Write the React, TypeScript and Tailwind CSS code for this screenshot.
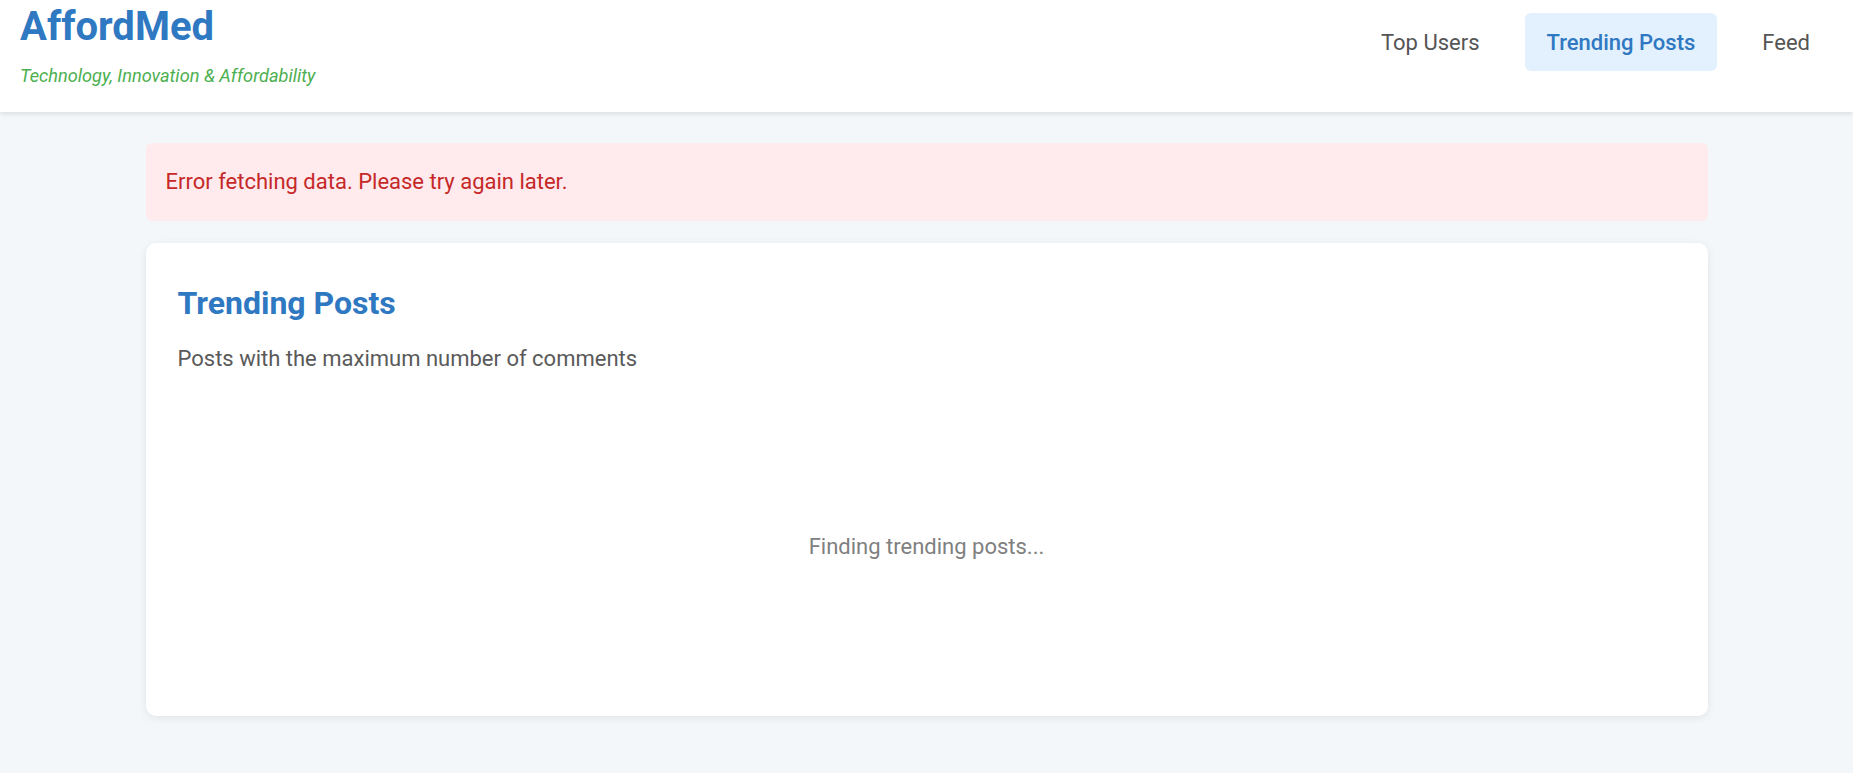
import { useState } from "react";

const NAV = ["Top Users", "Trending Posts", "Feed"];

export default function App() {
  const [active, setActive] = useState("Trending Posts");

  return (
    <div className="min-h-screen bg-[#f4f7fa] font-['Roboto',sans-serif]">
      <header className="h-[112px] bg-white shadow-[0_2px_5px_rgba(0,0,0,0.1)] flex justify-between items-start pl-[20px] pr-[21px]">
        <div className="pt-[3px]">
          <h1 className="text-[40px] leading-[48px] font-bold text-[#2f78c2]">AffordMed</h1>
          <p className="mt-[11px] text-[18.2px] leading-[27px] italic text-[#4caf50]">
            Technology, Innovation &amp; Affordability
          </p>
        </div>
        <nav className="flex gap-[23px] pt-[13px]">
          {NAV.map((item) => (
            <button
              key={item}
              onClick={() => setActive(item)}
              className={
                item === active
                  ? "h-[58px] px-[22px] rounded-md text-[22px] bg-[#e3f0fd] text-[#2f78c2] font-medium"
                  : "h-[58px] px-[22px] rounded-md text-[22px] text-[#555555]"
              }
            >
              {item}
            </button>
          ))}
        </nav>
      </header>

      <main className="max-w-[1562px] mx-auto pt-[31px]">
        <div className="bg-[#ffebee] text-[#c62828] rounded-md px-[20px] py-[22px] text-[22px] leading-[34px]">
          Error fetching data. Please try again later.
        </div>

        <section className="mt-[22px] bg-white rounded-[10px] shadow-[0_2px_8px_rgba(0,0,0,0.08)] pt-[41px] px-[32px] pb-[32px]">
          <h2 className="text-[32px] leading-[38px] font-bold text-[#2f78c2]">Trending Posts</h2>
          <p className="mt-[20px] text-[22px] leading-[33px] text-[#5a5a5a]">
            Posts with the maximum number of comments
          </p>
          <div className="pt-[155px] pb-[121px] text-center text-[22px] leading-[33px] text-[#808080]">
            Finding trending posts...
          </div>
        </section>
      </main>
    </div>
  );
}
